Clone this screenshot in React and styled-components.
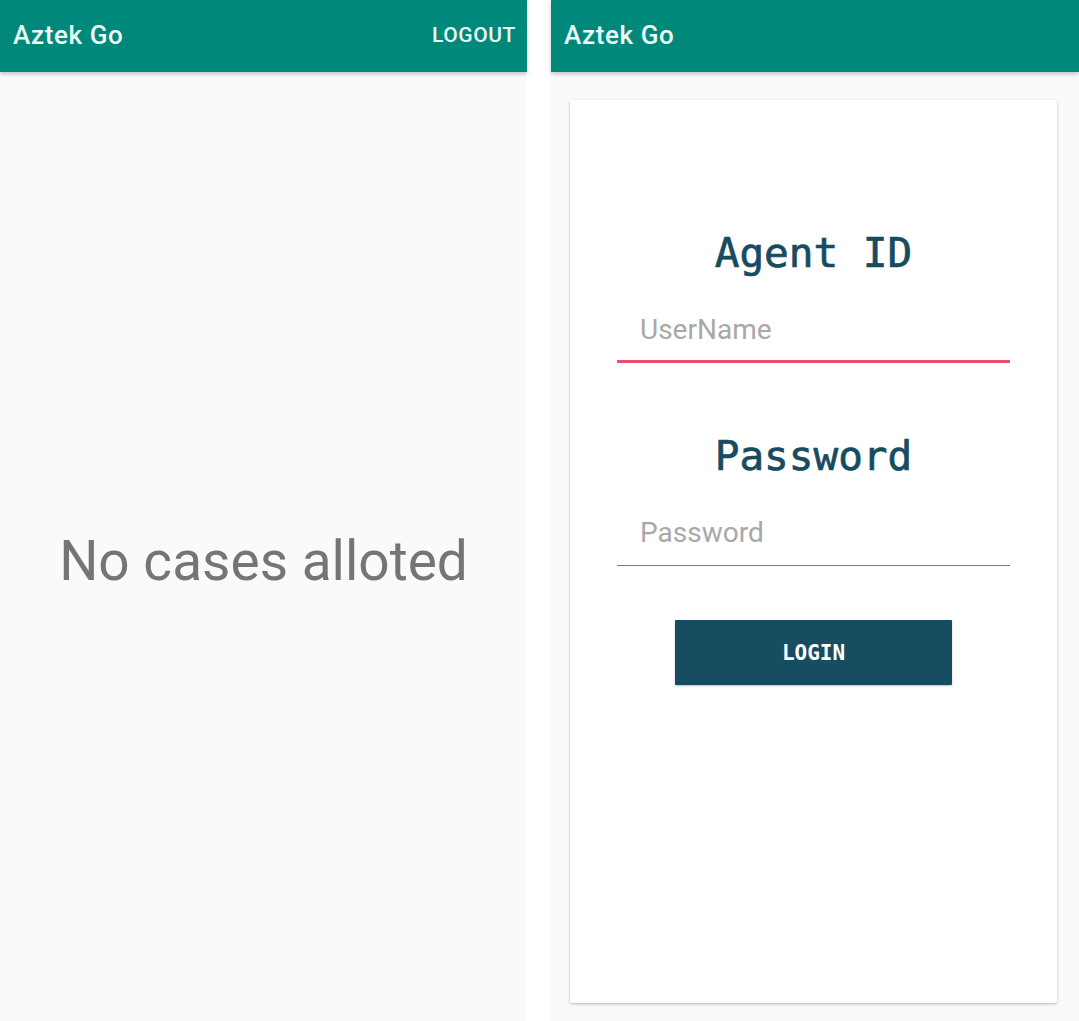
import React from "react";
import styled, { createGlobalStyle } from "styled-components";

const Global = createGlobalStyle`
  html, body { margin: 0; padding: 0; background: #ffffff; }
  body { font-family: Roboto, "Liberation Sans", sans-serif; }
  * { box-sizing: border-box; }
`;

const Page = styled.div`
  display: flex;
  gap: 24px;
  width: 1079px;
  height: 1021px;
  overflow: hidden;
`;

const Phone = styled.div`
  width: ${(p) => p.width}px;
  height: 100%;
  display: flex;
  flex-direction: column;
  background: #fafafa;
`;

const AppBar = styled.header`
  height: 72px;
  flex-shrink: 0;
  display: flex;
  align-items: center;
  justify-content: space-between;
  padding: 0 11px 3px 13px;
  background: #00897b;
  box-shadow: 0 2px 4px rgba(0, 0, 0, 0.22);
  position: relative;
  z-index: 1;
`;

const Title = styled.h1`
  margin: 0;
  font-family: Roboto, "Liberation Sans", sans-serif;
  font-weight: 500;
  font-size: 26px;
  color: #eef8f6;
  letter-spacing: 0.6px;
`;

const BarAction = styled.button`
  border: 0;
  background: none;
  padding: 0;
  font-family: Roboto, "Liberation Sans", sans-serif;
  font-weight: 500;
  font-size: 21px;
  color: #eef8f6;
  letter-spacing: 0.6px;
`;

const Empty = styled.main`
  flex: 1;
  display: flex;
  align-items: center;
  justify-content: center;
  padding-top: 28px;
`;

const EmptyText = styled.p`
  margin: 0;
  font-size: 55px;
  line-height: 66px;
  color: #757575;
`;

const CardArea = styled.main`
  flex: 1;
  padding: 28px 22px 18px 19px;
`;

const Card = styled.section`
  height: 100%;
  background: #ffffff;
  border-radius: 2px;
  box-shadow: 0 1px 3px rgba(0, 0, 0, 0.28);
  padding: 129px 47px 0;
  display: flex;
  flex-direction: column;
  align-items: stretch;
`;

const Label = styled.h2`
  margin: ${(p) => p.top}px 0 0;
  text-align: center;
  font-family: "DejaVu Sans Mono", "Liberation Mono", monospace;
  font-weight: 400;
  font-size: 41px;
  line-height: 48px;
  color: #164b60;
  -webkit-text-stroke: 0.7px #164b60;
`;

const Field = styled.input`
  margin-top: 24px;
  height: 62px;
  width: 100%;
  border: 0;
  border-bottom: ${(p) => (p.$focused ? "3px solid #ec4f6c" : "1px solid #7a7a7a")};
  padding: 0 23px ${(p) => (p.$focused ? 3 : 5)}px;
  background: transparent;
  font-family: Roboto, "Liberation Sans", sans-serif;
  font-size: 28px;
  color: #333;
  outline: none;
  &::placeholder { color: #a8a8a8; }
`;

const LoginButton = styled.button`
  align-self: center;
  margin-top: 54px;
  width: 277px;
  height: 65px;
  border: 0;
  border-radius: 1px;
  background: #164d60;
  box-shadow: 0 1px 2px rgba(0, 0, 0, 0.25);
  color: #ffffff;
  font-family: "DejaVu Sans Mono", "Liberation Mono", monospace;
  font-weight: 700;
  font-size: 21px;
  letter-spacing: 0;
`;

export default function App() {
  return (
    <Page>
      <Global />
      <Phone width={527}>
        <AppBar>
          <Title>Aztek Go</Title>
          <BarAction>LOGOUT</BarAction>
        </AppBar>
        <Empty>
          <EmptyText>No cases alloted</EmptyText>
        </Empty>
      </Phone>
      <Phone width={528}>
        <AppBar>
          <Title>Aztek Go</Title>
        </AppBar>
        <CardArea>
          <Card>
            <Label top={0}>Agent ID</Label>
            <Field $focused placeholder="UserName" />
            <Label top={69}>Password</Label>
            <Field type="password" placeholder="Password" />
            <LoginButton>LOGIN</LoginButton>
          </Card>
        </CardArea>
      </Phone>
    </Page>
  );
}
